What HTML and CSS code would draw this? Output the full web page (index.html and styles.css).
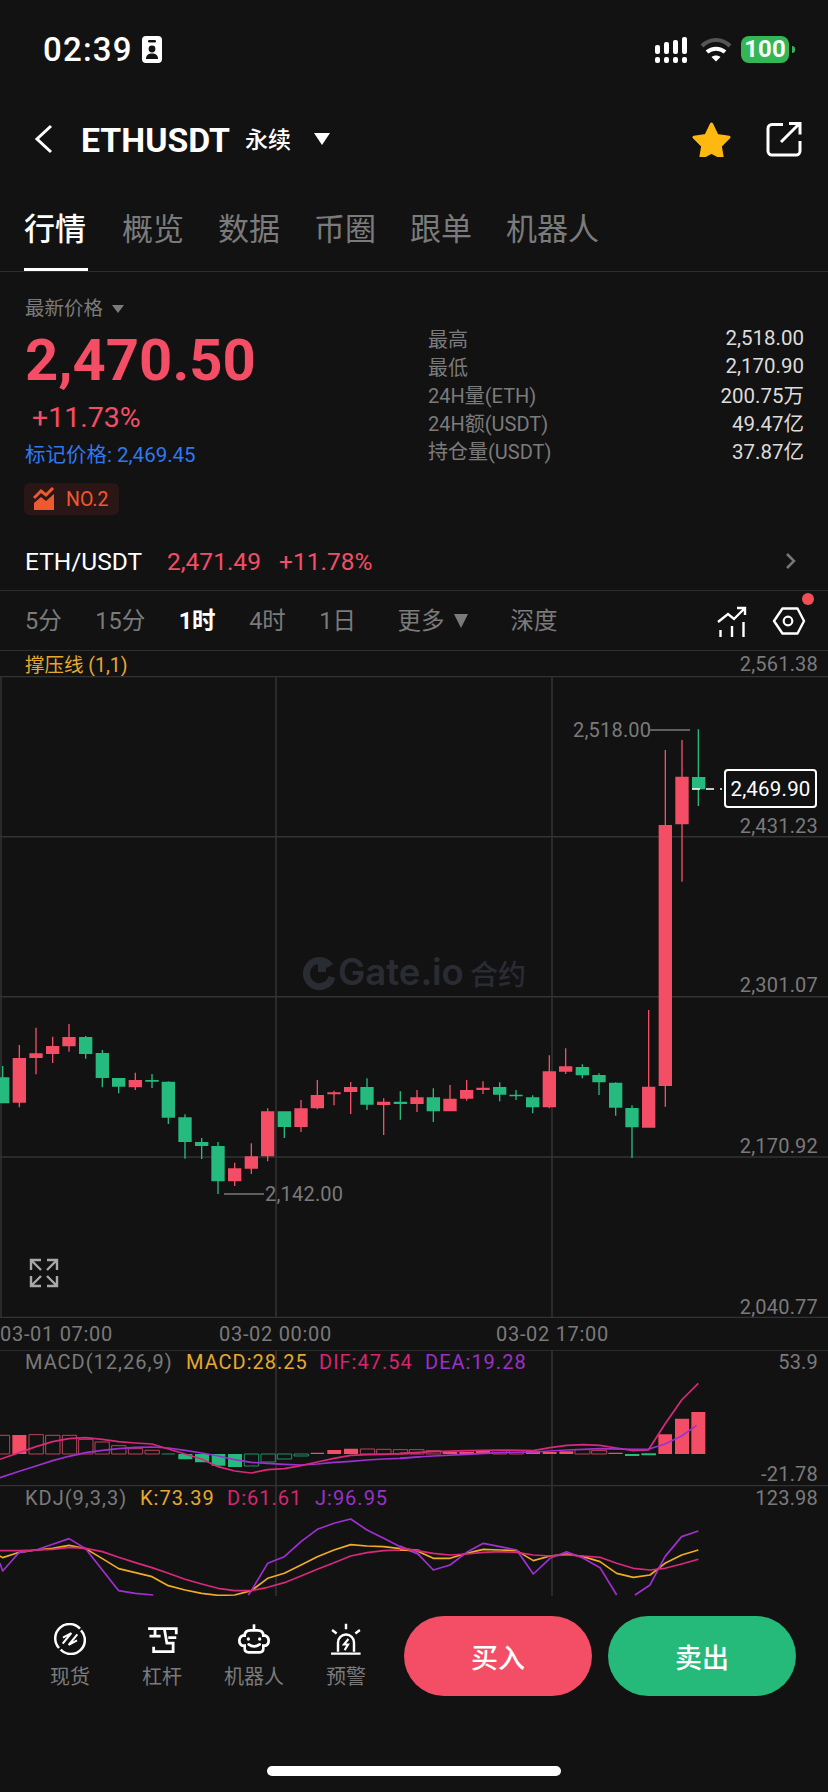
FILE: index.html
```html
<!DOCTYPE html>
<html lang="zh-CN">
<head>
<meta charset="utf-8">
<title>ETHUSDT 永续</title>
<link rel="stylesheet" href="styles.css">
</head>
<body>
<div class="app">

  <!-- status bar -->
  <div class="status">
    <div class="status-left">
      <span class="clock">02:39</span>
      <svg class="ico-id" viewBox="142 36 20 27">
        <rect x="142" y="36" width="20" height="27" rx="4" fill="#fff"/>
        <rect x="148" y="40" width="8" height="2.4" rx="1.2" fill="#121213"/>
        <circle cx="152" cy="49" r="3.4" fill="#121213"/>
        <path d="M146 59c0-4 2.500-5.500 6-5.500s6 1.500 6 5.500z" fill="#121213"/>
      </svg>
    </div>
    <div class="status-right">
      <svg class="ico-signal" viewBox="655 37 33 26" fill="#fff">
        <rect x="655" y="45" width="5" height="9" rx="2"/><rect x="664" y="42" width="5" height="12" rx="2"/><rect x="673" y="40" width="5" height="14" rx="2"/><rect x="682" y="37" width="5" height="17" rx="2"/>
        <rect x="655" y="57" width="5" height="6" rx="2"/><rect x="664" y="57" width="5" height="6" rx="2"/><rect x="673" y="57" width="5" height="6" rx="2"/><rect x="682" y="57" width="5" height="6" rx="2"/>
      </svg>
      <svg class="ico-wifi" viewBox="700 37 32 26" fill="none">
        <path d="M702 46c8-8 20-8 28 0" stroke="#565656" stroke-width="4"/>
        <path d="M707 52c5-4.500 13-4.500 18 0" stroke="#fff" stroke-width="4"/>
        <path d="M711.500 57c2.500-2 6.500-2 9 0L716 61.500z" fill="#fff"/>
      </svg>
      <div class="battery"><span class="battery-level">100</span><i class="battery-cap"></i></div>
    </div>
  </div>

  <!-- instrument header -->
  <div class="header">
    <svg class="ico-back" viewBox="34 124 20 32" fill="none"><path d="M51 127L37 140l14 13" stroke="#fff" stroke-width="3"/></svg>
    <span class="symbol">ETHUSDT</span>
    <span class="contract">永续</span>
    <i class="caret caret-white"></i>
    <svg class="ico-star" viewBox="692 122 40 36"><path d="M711.500 125l5.500 11.500 12 1.800-8.700 8.700 2 12-10.800-5.800-10.800 5.800 2-12-8.700-8.700 12-1.800z" fill="#ffb80f" stroke="#ffb80f" stroke-width="3" stroke-linejoin="round"/></svg>
    <svg class="ico-share" viewBox="766 122 36 36" fill="none" stroke="#fff" stroke-width="3">
      <path d="M783 125.500h-11a4 4 0 0 0-4 4v22.500a4 4 0 0 0 4 4h24a4 4 0 0 0 4-4v-10"/>
      <path d="M781 143l18-18M789 124.500h11v11"/>
    </svg>
  </div>

  <!-- section tabs -->
  <nav class="tabs">
    <a class="tab tab-on">行情</a><a class="tab">概览</a><a class="tab">数据</a><a class="tab">币圈</a><a class="tab">跟单</a><a class="tab">机器人</a>
  </nav>

  <!-- price summary -->
  <section class="summary">
    <div class="quote">
      <div class="quote-label">最新价格<i class="caret caret-grey"></i></div>
      <div class="quote-price">2,470.50</div>
      <div class="quote-change">+11.73%</div>
      <div class="quote-mark">标记价格: 2,469.45</div>
      <div class="rank">
        <svg class="ico-rank" viewBox="33 487 22 24" fill="#f0582f">
          <path d="M34 503l7-6 5 4 8-7v16H34z"/>
          <path d="M34 498l7-7 5 4 7-7" fill="none" stroke="#f0582f" stroke-width="3"/>
        </svg>
        <span>NO.2</span>
      </div>
    </div>
    <dl class="stats">
      <div class="stat"><dt>最高</dt><dd>2,518.00</dd></div>
      <div class="stat"><dt>最低</dt><dd>2,170.90</dd></div>
      <div class="stat"><dt>24H量(ETH)</dt><dd>200.75万</dd></div>
      <div class="stat"><dt>24H额(USDT)</dt><dd>49.47亿</dd></div>
      <div class="stat"><dt>持仓量(USDT)</dt><dd>37.87亿</dd></div>
    </dl>
  </section>

  <!-- spot pair link -->
  <div class="spot-row">
    <span class="spot-name">ETH/USDT</span>
    <span class="spot-price">2,471.49</span>
    <span class="spot-change">+11.78%</span>
    <svg class="ico-more" viewBox="786 552 12 18" fill="none"><path d="M788 554l7 7-7 7" stroke="#777" stroke-width="2.500"/></svg>
  </div>

  <!-- interval selector -->
  <div class="intervals">
    <span class="iv">5分</span><span class="iv">15分</span><span class="iv iv-on">1时</span><span class="iv">4时</span><span class="iv">1日</span>
    <span class="iv iv-more">更多<i class="caret caret-big"></i></span>
    <span class="iv">深度</span>
    <svg class="ico-tool" viewBox="716 604 34 34" fill="none" stroke="#fff" stroke-width="2.400">
      <path d="M720.500 637v-7M732 637v-11M743.500 637v-15"/>
      <path d="M718 622l10-8 6 5 10-10M737 608h8v7"/>
    </svg>
    <span class="tool-wrap">
      <svg class="ico-hex" viewBox="770 604 38 34" fill="none" stroke="#fff">
        <path d="M774 621l8.500-12.500h15L804 621l-6.500 12.500h-15z" stroke-width="2.400" stroke-linejoin="round"/>
        <circle cx="788" cy="621" r="4.300" stroke-width="2.200"/>
      </svg>
      <i class="dot"></i>
    </span>
  </div>

  <!-- chart legend -->
  <div class="legend">
    <span class="legend-name">撑压线 (1,1)</span>
    <span class="axis-text">2,561.38</span>
  </div>

  <!-- candlestick pane -->
  <svg class="pane pane-price" viewBox="0 676 828 642">
    <g class="grid">
      <path d="M0 676.500H828M0 836.700H828M0 996.700H828M0 1157H828M0 1317.500H828M1 676V1318M276 676V1318M552 676V1318"/>
    </g>

    <g class="mark">
      <path d="M330 966a13 13 0 1 0 2 11" fill="none" stroke="#2a2c33" stroke-width="7"/>
      <rect x="318" y="964" width="8" height="8" fill="#2a2c33"/>
      <text class="mark-en" x="338" y="985">Gate.io</text>
      <text class="mark-cn" x="470" y="985">合约</text>
    </g>

    <!-- first run of candles -->
    <g transform="scale(.33333) translate(0 3000)">
      <path class="up" d="M58 135V322M40 176h36v130h-36zM108 83V223M90 162h36v10h-36zM158 110V189M140 140h36v20h-36zM207 72V155M189 113h36v24h-36zM406 218V270M388 242h36v18h-36zM704 488V558M686 507h36v35h-36zM754 430V522M736 471h36v33h-36zM803 325V484M785 336h36v131h-36zM903 300V396M885 327h36v52h-36zM952 240V328M934 287h36v36h-36zM1002 272V316M984 279h36v2h-36zM1052 246V342M1034 263h36v11h-36zM1151 295V405M1133 307h36v6h-36zM1251 270V336M1233 294h36v16h-36z"/>
      <path class="down" d="M8 198V310M-10 234h36v74h-36zM257 108V176M239 113h36v47h-36zM307 150V262M289 161h36v71h-36zM356 234V280M338 236h36v22h-36zM456 222V264M438 242h36v1h-36zM505 244V372M487 247h36v104h-36zM555 343V476M537 354h36v70h-36zM605 414V477M587 428h36v8h-36zM654 426V582M636 440h36v102h-36zM853 334V414M835 336h36v43h-36zM1101 235V330M1083 263h36v49h-36zM1201 274V359M1183 307h36v3h-36z"/>
    </g>
    <!-- second run of candles -->
    <g transform="scale(.33333) translate(1200 3000)">
      <path class="up" d="M150 255V334M132 298h36v34h-36zM200 240V302M182 272h36v22h-36zM249 244V282M231 265h36v3h-36zM448 166V325M430 216h36v104h-36zM497 145V222M479 201h36v12h-36zM746 30V383M728 262h36v119h-36z"/>
      <path class="down" d="M100 265V366M82 294h36v38h-36zM299 247V304M281 263h36v19h-36zM348 270V300M330 286h36v1h-36zM398 286V340M380 294h36v26h-36zM547 193V235M529 203h36v21h-36zM597 220V285M579 227h36v18h-36zM647 247V347M629 250h36v71h-36zM696 316V474M678 326h36v54h-36z"/>
    </g>
    <!-- breakout candles -->
    <g transform="scale(.33333) translate(1620 2040)">
      <path class="up" d="M376 210V1280M358 437h36v779h-36zM426 180V605M408 292h36v139h-36z"/>
      <path class="down" d="M475 148V378M458 293h36v33h-36z"/>
    </g>

    <path class="guide" d="M650 730H690M224 1194H264"/>
    <text class="axis-text" x="573" y="737">2,518.00</text>
    <text class="axis-text" x="265" y="1201">2,142.00</text>

    <path class="dash" d="M692 789H722"/>
    <rect class="tag" x="725" y="770" width="91" height="37" rx="3"/>
    <text class="tag-text" x="770.500" y="796">2,469.90</text>

    <text class="axis-text end" x="818" y="833">2,431.23</text>
    <text class="axis-text end" x="818" y="992">2,301.07</text>
    <text class="axis-text end" x="818" y="1153">2,170.92</text>
    <text class="axis-text end" x="818" y="1314">2,040.77</text>

    <path class="expand" d="M31 1270v-10h10M31 1260l10 10M57 1276v10H47M57 1286l-10-10M47 1260h10v10M57 1260l-10 10M41 1286H31v-10M31 1286l10-10"/>
  </svg>

  <!-- time axis -->
  <div class="times">
    <span>03-01 07:00</span><span>03-02 00:00</span><span>03-02 17:00</span>
  </div>

  <!-- MACD pane -->
  <svg class="pane pane-macd" viewBox="0 1350 828 135">
    <g class="grid"><path d="M0 1350H828M276 1350V1485M552 1350V1485"/></g>
    <text class="axis-text wide" x="25" y="1369">MACD(12,26,9)</text>
    <text class="axis-text wide c-yellow" x="186" y="1369">MACD:28.25</text>
    <text class="axis-text wide c-pink" x="319" y="1369">DIF:47.54</text>
    <text class="axis-text wide c-purple" x="425" y="1369">DEA:19.28</text>
    <text class="axis-text end" x="818" y="1369">53.9</text>
    <text class="axis-text end" x="818" y="1481">-21.78</text>
    <g transform="scale(.33333) translate(0 3900)">
      <path class="bar-up-o" d="M-12 406H29V462H-12ZM87 404h43v58H87ZM137 406h43v56H137ZM187 406h43v56H187ZM236 418h43v44H236ZM285 426h43v36H285ZM335 437h43v25H335ZM385 446h43v16H385ZM435 451h43v11H435ZM1081 447h43v15H1081ZM1130 448h43v14H1130ZM1180 449h43v13H1180Z"/>
      <path class="bar-up" d="M37 405h42v57H37ZM932 458h40v4H932ZM982 450h41v12H982ZM1032 446h42v16H1032Z"/>
      <path class="bar-down" d="M535 462h42v16H535ZM585 462h42v25H585ZM635 462h41v35H635ZM684 462h42v39H684Z"/>
      <path class="bar-down-o" d="M485 462h40M733 462h43v36H733ZM783 462h43v24H783ZM832 462h43v15H832ZM882 462h43v6H882Z"/>
      <polyline class="l-dea" points="0,533 58,514 108,498 158,482 207,469 257,458 307,451 356,446 406,442 456,441 505,444 555,451 605,459 654,468 704,479 754,487 803,490 853,493 903,495 952,492 1002,487 1052,484 1101,480 1151,477 1201,475 1260,471"/>
      <polyline class="l-dif" points="0,478 58,458 108,440 158,425 207,416 257,413 307,418 356,425 406,429 456,432 505,447 555,462 605,477 654,500 704,513 754,519 803,509 853,506 903,497 952,486 1002,475 1052,466 1101,464 1151,463 1201,461 1260,459"/>
    </g>
    <g transform="scale(.33333) translate(1200 3900)">
      <path class="bar-up-o" d="M28 449h44v13H28ZM78 452h44v10H78ZM278 452h42v10H278ZM328 452h42v10H328ZM525 449h45v13H525ZM575 452h45v10H575Z"/>
      <path class="bar-up" d="M128 455h44v7H128ZM178 455h44v7H178ZM228 453h42v9H228ZM378 453h42v9H378ZM428 456h42v6H428ZM478 454h42v8H478ZM625 458h43v4H625ZM775 403h41v59H775ZM825 356h42v106H825ZM874 336h42v126H874Z"/>
      <path class="bar-down" d="M675 462h43v6H675ZM724 460h44v6H724Z"/>
      <polyline class="l-dif" points="0,460 100,455 200,452 300,450 400,452 450,443 500,436 550,434 600,436 650,444 700,452 745,450 795,372 845,300 895,250"/>
      <polyline class="l-dea" points="0,474 100,468 200,463 300,458 400,456 500,450 600,446 700,448 745,448 795,432 845,408 890,376"/>
    </g>
  </svg>

  <!-- KDJ pane -->
  <svg class="pane pane-kdj" viewBox="0 1485 828 111">
    <g class="grid"><path d="M0 1485.500H828M276 1485V1596M552 1485V1596"/></g>
    <text class="axis-text wide" x="25" y="1505">KDJ(9,3,3)</text>
    <text class="axis-text wide c-yellow" x="140" y="1505">K:73.39</text>
    <text class="axis-text wide c-pink" x="227" y="1505">D:61.61</text>
    <text class="axis-text wide c-purple" x="315" y="1505">J:96.95</text>
    <text class="axis-text end" x="818" y="1505">123.98</text>
    <g transform="scale(.33333) translate(0 3900)">
      <polyline class="l-k" points="0,768 8,773 58,757 108,750 158,745 207,736 257,746 307,776 356,806 406,818 456,830 505,857 555,870 605,880 654,886 704,885 754,872 803,835 853,820 903,795 952,770 1002,750 1052,734 1101,738 1151,740 1201,746 1260,752"/>
      <polyline class="l-j" points="0,790 8,813 58,757 108,750 158,733 207,716 257,746 307,810 356,872 406,880 460,885"/>
      <polyline class="l-j" points="745,885 754,872 803,790 853,770 903,725 952,688 1002,670 1052,657 1101,690 1151,715 1201,740 1260,765"/>
      <polyline class="l-d" points="0,752 58,752 108,750 158,748 207,742 257,745 307,755 356,772 406,788 456,803 505,820 555,838 605,852 654,865 704,872 754,872 803,862 853,848 903,828 952,808 1002,788 1052,768 1101,758 1151,752 1201,750 1260,752"/>
    </g>
    <g transform="scale(.33333) translate(1200 3900)">
      <polyline class="l-k" points="0,750 50,752 100,775 150,775 200,760 250,748 300,750 350,752 400,782 450,768 500,762 550,770 600,785 650,820 700,832 750,825 795,790 845,765 895,750"/>
      <polyline class="l-j" points="0,738 50,758 100,810 150,795 200,757 250,730 300,740 350,750 400,822 450,775 500,755 550,775 600,803 650,885"/>
      <polyline class="l-j" points="705,885 750,855 795,770 845,710 895,693"/>
      <polyline class="l-d" points="0,745 50,752 100,760 150,765 200,762 250,757 300,755 350,757 400,765 450,768 500,765 550,768 600,772 650,790 700,805 750,810 795,805 845,792 895,778"/>
    </g>
  </svg>

  <!-- trade bar -->
  <div class="trade">
    <a class="tool">
      <svg class="tool-ico" viewBox="72 40 96 96" fill="none" stroke="#fff" stroke-width="7.500">
        <path d="M150 57A42 42 0 0 0 87 115M92 120A42 42 0 0 0 153 62"/>
        <path d="M99 84L124 70L98 102M142 74L116 106L141 92" stroke-width="6"/>
      </svg>
      <span>现货</span>
    </a>
    <a class="tool">
      <svg class="tool-ico" viewBox="350 42 92 92" fill="none" stroke="#fff" stroke-width="8">
        <path d="M356 58H437V74M376 58V80M360 80H392M403 60L410 100H428V124H372V110M414 84H437"/>
      </svg>
      <span>杠杆</span>
    </a>
    <a class="tool">
      <svg class="tool-ico" viewBox="625 42 96 96" fill="none" stroke="#fff" stroke-width="8">
        <path d="M673 46V64"/>
        <path d="M645 80Q645 64 662 64H684Q701 64 701 80H708Q717 84 717 95Q717 106 708 110H701V118Q701 130 690 130H657Q645 130 645 118V110H638Q629 106 629 95Q629 84 638 80Z"/>
        <path d="M657 106Q673 118 690 106" stroke-linecap="round"/>
        <circle cx="656" cy="90" r="5" fill="#fff" stroke="none"/>
        <circle cx="690" cy="90" r="5" fill="#fff" stroke="none"/>
      </svg>
      <span>机器人</span>
    </a>
    <a class="tool">
      <svg class="tool-ico" viewBox="902 42 92 92" fill="none" stroke="#fff" stroke-width="7">
        <path d="M905 130H990M925 125V98a23 23 0 0 1 46 0V125M948 44V60M908 62L921 72M988 62L975 72"/>
        <path d="M955 88L942 104H954L944 120" stroke-width="6"/>
      </svg>
      <span>预警</span>
    </a>
    <a class="btn btn-buy">买入</a>
    <a class="btn btn-sell">卖出</a>
  </div>

  <div class="home"></div>
</div>
</body>
</html>
```
FILE: styles.css
```css
* { box-sizing: border-box; }

html, body { margin: 0; padding: 0; background: #121213; }

body {
  font-family: Roboto, "Noto Sans CJK SC", sans-serif;
  color: #fff;
}

svg { display: block; }
i { display: block; font-style: normal; }
dl, dd { margin: 0; }

.app { width: 828px; height: 1792px; overflow: hidden; }

/* status bar */
.status {
  height: 100px;
  padding: 36px 39px 0 43px;
  display: flex;
  justify-content: space-between;
  align-items: flex-start;
}
.status-left { display: flex; align-items: center; height: 27px; gap: 9px; }
.clock { font-size: 33px; font-weight: 500; letter-spacing: 1.200px; line-height: 27px; }
.ico-id { width: 20px; height: 27px; }
.status-right { display: flex; align-items: center; height: 27px; }
.ico-signal { width: 33px; height: 26px; margin-right: 12px; }
.ico-wifi { width: 32px; height: 26px; margin-right: 9px; }
.battery {
  width: 48px;
  height: 27px;
  border-radius: 8px;
  background: #34b556;
  display: flex;
  align-items: center;
  justify-content: center;
  position: relative;
}
.battery-level { font-size: 24px; font-weight: 700; line-height: 27px; color: #f4fff6; }
.battery-cap {
  position: absolute;
  right: -6px;
  top: 10px;
  width: 3px;
  height: 7px;
  border-radius: 0 3px 3px 0;
  background: #34b556;
}

/* header */
.header {
  height: 78px;
  padding-left: 34px;
  display: flex;
  align-items: center;
}
.ico-back { width: 20px; height: 32px; margin-right: 27px; }
.symbol { font-size: 33.800px; font-weight: 700; line-height: 40px; width: 164px; padding-top: 3px; }
.contract { font-size: 23px; font-weight: 500; line-height: 32px; width: 69px; padding-top: 3px; box-sizing: content-box; }
.caret { width: 0; height: 0; border-style: solid; border-color: transparent; border-bottom-width: 0; }
.caret-white { border-width: 12px 8px 0; border-top-color: #fff; }
.ico-star { width: 40px; height: 36px; margin-left: 362px; }
.ico-share { width: 36px; height: 36px; margin-left: 34px; }

/* tabs */
.tabs {
  height: 94px;
  padding: 0 0 0 24px;
  display: flex;
  gap: 34px;
  border-bottom: 1px solid #2e2e30;
}
.tab {
  height: 93px;
  padding-top: 32px;
  font-size: 31px;
  line-height: 40px;
  color: #7b7b7b;
}
.tab-on { color: #fff; border-bottom: 3px solid #fff; font-weight: 500; width: 64px; }

/* price summary */
.summary {
  height: 260px;
  padding: 25px 24px 0 25px;
  display: flex;
  justify-content: space-between;
}
.quote { width: 300px; }
.quote-label {
  display: flex;
  align-items: center;
  gap: 9px;
  font-size: 19.500px;
  line-height: 24px;
  color: #7b7b7b;
}
.caret-grey { border-width: 8px 6px 0; border-top-color: #7b7b7b; }
.quote-price {
  margin-top: 9px;
  font-size: 58px;
  font-weight: 700;
  line-height: 60px;
  color: #f44e66;
}
.quote-change {
  margin-top: 13px;
  padding-left: 7px;
  font-size: 28.500px;
  font-weight: 400;
  line-height: 30px;
  color: #f44e66;
}
.quote-mark {
  margin-top: 10px;
  font-size: 20.500px;
  line-height: 24px;
  color: #2f78f0;
  white-space: nowrap;
}
.rank {
  margin: 16px 0 0 -1px;
  width: 95px;
  height: 32px;
  padding-left: 9px;
  display: flex;
  align-items: center;
  gap: 11px;
  border-radius: 6px;
  background: #2a1715;
  font-size: 19.500px;
  color: #f0582f;
}
.ico-rank { width: 22px; height: 24px; }

.stats { width: 376px; padding-top: 27px; }
.stat {
  height: 28px;
  display: flex;
  align-items: center;
  justify-content: space-between;
  font-size: 20px;
}
.stat dt { color: #7b7b7b; }
.stat dd { color: #dcdcdc; font-size: 20.500px; }

/* spot pair row */
.spot-row {
  height: 58px;
  padding: 0 31px 0 25px;
  display: flex;
  align-items: center;
  font-size: 24.500px;
  color: #f44e66;
}
.spot-name { color: #fff; width: 142px; }
.spot-price { width: 112px; }
.spot-change { flex: 1; }
.ico-more { width: 12px; height: 18px; }

/* interval selector */
.intervals {
  height: 61px;
  padding-left: 25px;
  display: flex;
  align-items: center;
  border-top: 1px solid #2e2e30;
  border-bottom: 1px solid #2e2e30;
  font-size: 23.500px;
  color: #7b7b7b;
}
.iv { margin-right: 33.500px; line-height: 32px; white-space: nowrap; }
.iv-on { color: #fff; font-weight: 700; }
.iv-more { display: flex; align-items: center; gap: 9px; margin: 0 43px 0 8px; }
.caret-big { border-width: 14px 7px 0; border-top-color: #7b7b7b; }
.ico-tool { width: 34px; height: 34px; margin: 0 20px 0 125px; flex: none; }
.ico-hex { width: 38px; height: 34px; }
.tool-wrap { position: relative; flex: none; }
.dot {
  position: absolute;
  left: 32px;
  top: -11px;
  width: 12px;
  height: 12px;
  border-radius: 50%;
  background: #f44e55;
}

/* chart legend */
.legend {
  height: 25px;
  padding: 0 10px 0 25px;
  display: flex;
  justify-content: space-between;
  align-items: center;
}
.legend-name { font-size: 19.500px; color: #e6a92e; }

/* panes */
.pane { width: 828px; }
.pane-price { height: 642px; }
.pane-macd { height: 135px; }
.pane-kdj { height: 111px; }

.grid path { fill: none; stroke: #333335; stroke-width: 1.500; }

.axis-text { font-size: 20px; fill: #7a7a7a; color: #7a7a7a; letter-spacing: .2px; }
.wide { letter-spacing: 1px; }
.end { text-anchor: end; }
.c-yellow { fill: #e6a92e; }
.c-pink { fill: #d6266f; }
.c-purple { fill: #9b30c8; }

.mark-en { font-family: Inter, sans-serif; font-size: 36.500px; font-weight: 600; fill: #2a2c33; }
.mark-cn { font-family: "Noto Sans CJK SC", sans-serif; font-size: 28px; font-weight: 500; fill: #2a2c33; }

.up { fill: #f44e66; stroke: #f44e66; stroke-width: 4; }
.down { fill: #26bb7e; stroke: #26bb7e; stroke-width: 4; }

.guide { fill: none; stroke: #7a7a7a; stroke-width: 1.300; }
.dash { fill: none; stroke: #fff; stroke-width: 1.500; stroke-dasharray: 8 6; }
.tag { fill: #121213; stroke: #fff; stroke-width: 2; }
.tag-text { font-size: 20.500px; fill: #fff; text-anchor: middle; letter-spacing: .2px; }
.expand { fill: none; stroke: #a8a8a8; stroke-width: 2.400; }

.bar-up { fill: #f44e66; }
.bar-down { fill: #26bb7e; }
.bar-up-o { fill: none; stroke: #b84559; stroke-width: 3; }
.bar-down-o { fill: none; stroke: #22906a; stroke-width: 3; }

.l-dif, .l-dea, .l-k, .l-d, .l-j { fill: none; stroke-width: 5; stroke-linejoin: round; }
.l-dif, .l-d { stroke: #d9297a; }
.l-dea, .l-j { stroke: #a030d0; }
.l-k { stroke: #f0ac25; }

/* time axis */
.times {
  height: 32px;
  display: flex;
  align-items: center;
  font-size: 20px;
  letter-spacing: .7px;
  color: #7a7a7a;
}
.times span { white-space: nowrap; }
.times span:nth-child(1) { width: 219px; }
.times span:nth-child(2) { width: 277px; }

/* trade bar */
.trade {
  height: 100px;
  padding: 20px 32px 0 24px;
  display: flex;
  align-items: flex-start;
}
.tool {
  width: 92px;
  display: flex;
  flex-direction: column;
  align-items: center;
  font-size: 20px;
  line-height: 26px;
  color: #7b7b7b;
  white-space: nowrap;
}
.tool-ico { width: 32px; height: 32px; margin: 7px 0 9px; }
.btn {
  width: 188px;
  height: 80px;
  border-radius: 40px;
  display: flex;
  align-items: center;
  justify-content: center;
  font-size: 27px;
  font-weight: 500;
  color: #fff;
}
.btn-buy { margin-left: 12px; background: #f44e66; }
.btn-sell { margin-left: 16px; background: #25b97a; }

/* home indicator */
.home {
  width: 294px;
  height: 10px;
  margin: 70px 0 0 267px;
  border-radius: 5px;
  background: #fff;
}
```
